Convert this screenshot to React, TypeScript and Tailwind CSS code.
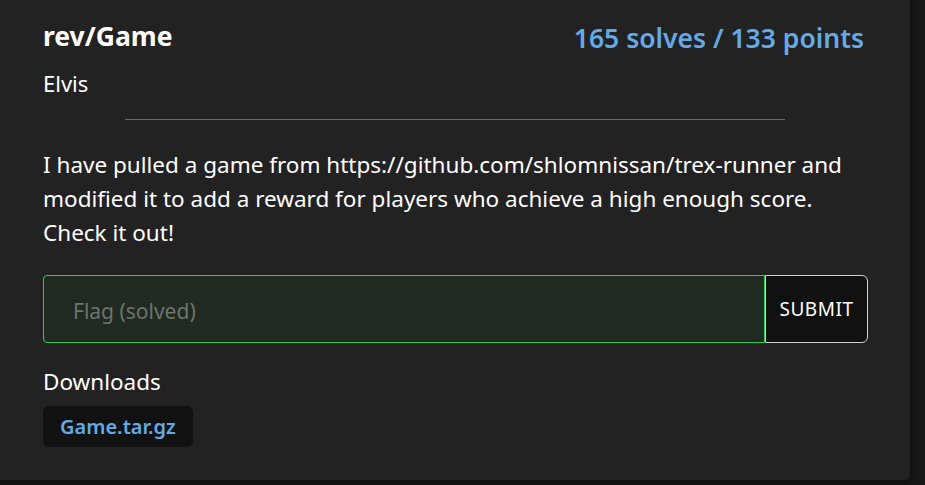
export default function App() {
  return (
    <div className="w-[925px] h-[485px] bg-[#171717] overflow-hidden" style={{ fontFamily: "'Noto Sans', 'Open Sans', sans-serif" }}>
      <div className="w-[910px] h-[480px] bg-[#222222] rounded-br-md shadow-[0_0_8px_rgba(0,0,0,0.6)] pl-[43px] pr-[42px] pt-[16px] text-white">
        {/* Header */}
        <div className="flex items-start justify-between">
          <div className="text-[26.5px] font-bold leading-[40px]">rev/Game</div>
          <div className="text-[26.5px] font-semibold leading-[44px] text-[#63aae6] mr-[4px]">165 solves / 133 points</div>
        </div>
        <div className="text-[22px] leading-[32px] mt-[7px]">Elvis</div>
        <div className="ml-[82px] mr-[83px] mt-[20px] border-t border-[#6b6b6b]"></div>

        <p className="text-[22.5px] leading-[34px] mt-[28px]">
          I have pulled a game from https://github.com/shlomnissan/trex-runner and modified it to add a reward for players who achieve a high enough score. Check it out!
        </p>

        {/* Flag form */}
        <div className="flex mt-[25px] h-[68px]">
          <input
            readOnly
            placeholder="Flag (solved)"
            className="flex-1 min-w-0 bg-[#212a21] border border-[#2ecc55] rounded-l-[4px] px-[29px] pt-[5px] text-[21px] placeholder:text-[#6e746e] outline-none"
          />
          <button className="w-[103px] bg-[#111111] border border-[#d0d0d0] rounded-r-[6px] text-[19px] tracking-[0.5px] text-white">
            SUBMIT
          </button>
        </div>

        <div className="text-[22.5px] leading-[32px] mt-[23px]">Downloads</div>
        <div className="mt-[8px]">
          <span className="inline-block bg-[#111111] rounded-[6px] px-[17px] py-[6px] text-[20px] font-semibold leading-[29px] text-[#63aae6]">
            Game.tar.gz
          </span>
        </div>
      </div>
    </div>
  )
}
